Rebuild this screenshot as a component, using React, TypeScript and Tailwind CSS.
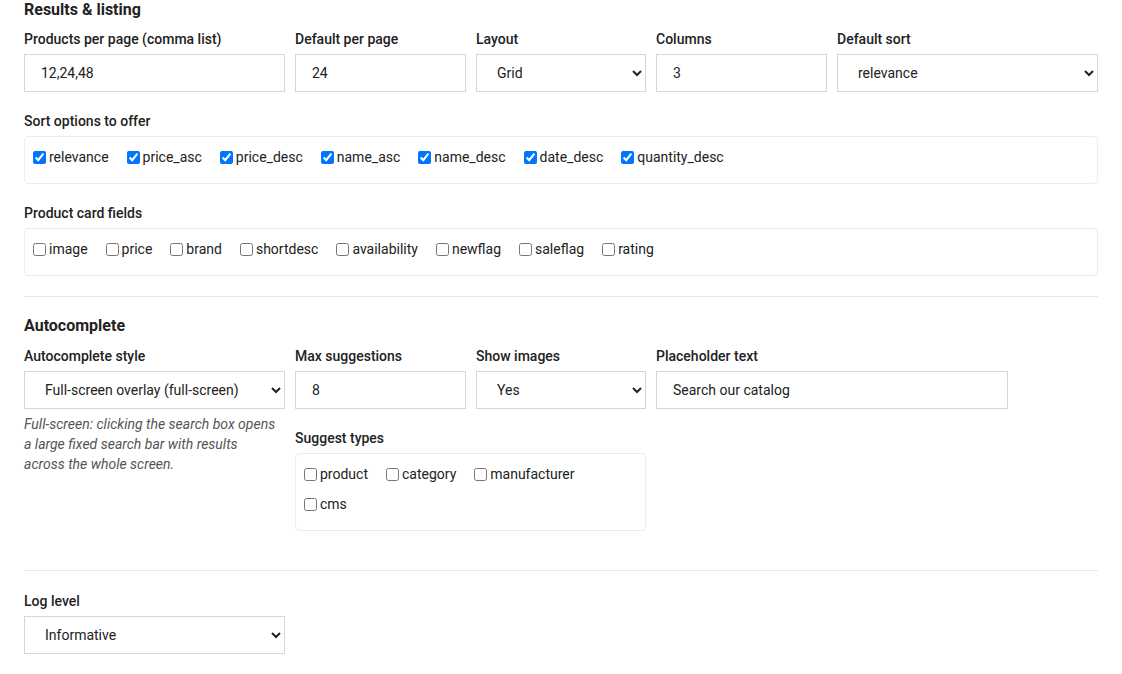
import React from "react";

const font = { fontFamily: "Roboto, 'Noto Sans', sans-serif" };

function Label({ children }: { children: React.ReactNode }) {
  return <div className="text-[14px] font-medium leading-[20px] mb-[5px] text-[#222]">{children}</div>;
}

function TextInput({ value }: { value: string }) {
  return (
    <input
      defaultValue={value}
      className="block w-full h-[38px] border border-[#d6d6d6] bg-white px-[16px] text-[14px] text-[#222] outline-none"
    />
  );
}

function Select({ value, options }: { value: string; options: string[] }) {
  return (
    <select
      defaultValue={value}
      className="block w-full h-[38px] border border-[#d6d6d6] bg-white pl-[16px] pr-[4px] text-[14px] text-[#222] outline-none"
    >
      {options.map((o) => (
        <option key={o}>{o}</option>
      ))}
    </select>
  );
}

function Check({ label, checked }: { label: string; checked?: boolean }) {
  return (
    <label className="flex items-center h-[20px] mb-[10px] mr-[18px] text-[14px] text-[#222]">
      <input type="checkbox" defaultChecked={checked} className="w-[13px] h-[13px] mr-[3px]" />
      <span>{label}</span>
    </label>
  );
}

function Group({ children }: { children: React.ReactNode }) {
  return (
    <div className="border border-[#ececec] rounded-[4px] pt-[10px] pb-[6px] pl-[8px] pr-[8px]">{children}</div>
  );
}

export default function App() {
  const sorts = ["relevance", "price_asc", "price_desc", "name_asc", "name_desc", "date_desc", "quantity_desc"];
  const fields = ["image", "price", "brand", "shortdesc", "availability", "newflag", "saleflag", "rating"];
  return (
    <div className="w-[1122px] min-h-[674px] bg-white px-[24px] text-[#222]" style={font}>
      <h2 className="text-[16px] font-bold leading-[20px] mb-[9px]">Results &amp; listing</h2>
      <div className="grid grid-cols-[261px_171px_170px_171px_261px] gap-x-[10px]">
        <div>
          <Label>Products per page (comma list)</Label>
          <TextInput value="12,24,48" />
        </div>
        <div>
          <Label>Default per page</Label>
          <TextInput value="24" />
        </div>
        <div>
          <Label>Layout</Label>
          <Select value="Grid" options={["Grid", "List"]} />
        </div>
        <div>
          <Label>Columns</Label>
          <TextInput value="3" />
        </div>
        <div>
          <Label>Default sort</Label>
          <Select value="relevance" options={sorts} />
        </div>
      </div>

      <div className="mt-[19px]">
        <Label>Sort options to offer</Label>
        <Group>
          <div className="flex flex-wrap">
            {sorts.map((s) => (
              <Check key={s} label={s} checked />
            ))}
          </div>
        </Group>
      </div>

      <div className="mt-[19px]">
        <Label>Product card fields</Label>
        <Group>
          <div className="flex flex-wrap">
            {fields.map((s) => (
              <Check key={s} label={s} />
            ))}
          </div>
        </Group>
      </div>

      <div className="mt-[20px] border-t border-[#e8e8e8]" />

      <h2 className="mt-[19px] text-[16px] font-bold leading-[20px] mb-[10px]">Autocomplete</h2>
      <div className="grid grid-cols-[261px_171px_170px_352px] gap-x-[10px] items-start">
        <div>
          <Label>Autocomplete style</Label>
          <Select
            value="Full-screen overlay (full-screen)"
            options={["Full-screen overlay (full-screen)", "Dropdown (dropdown)"]}
          />
        </div>
        <div>
          <Label>Max suggestions</Label>
          <TextInput value="8" />
        </div>
        <div>
          <Label>Show images</Label>
          <Select value="Yes" options={["Yes", "No"]} />
        </div>
        <div>
          <Label>Placeholder text</Label>
          <TextInput value="Search our catalog" />
        </div>
        <p className="mt-[5px] w-[254px] text-[14px] leading-[20px] italic text-[#555]">
          Full-screen: clicking the search box opens a large fixed search bar with results across the whole screen.
        </p>
        <div className="col-span-2 mt-[19px]">
          <Label>Suggest types</Label>
          <Group>
            <div className="flex">
              <Check label="product" />
              <Check label="category" />
              <Check label="manufacturer" />
            </div>
            <div className="flex">
              <Check label="cms" />
            </div>
          </Group>
        </div>
      </div>

      <div className="mt-[39px] border-t border-[#e8e8e8]" />

      <div className="mt-[20px] w-[261px]">
        <Label>Log level</Label>
        <Select value="Informative" options={["Informative", "Warning", "Error"]} />
      </div>
    </div>
  );
}
